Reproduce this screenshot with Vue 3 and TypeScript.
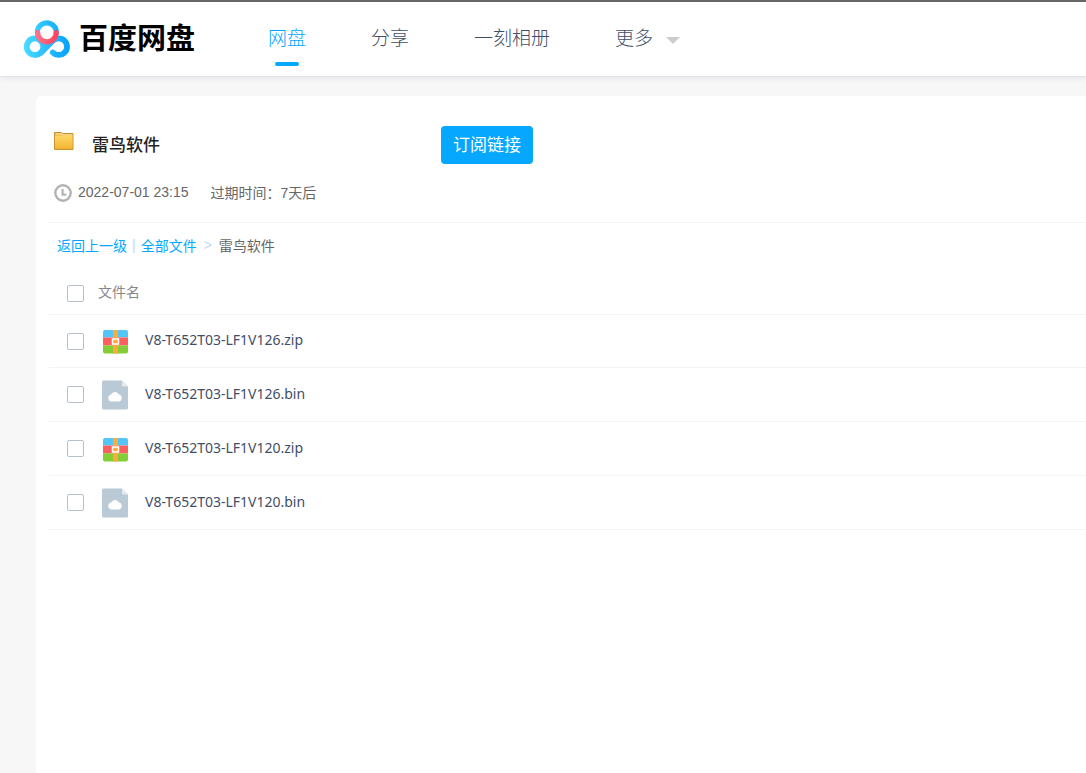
<script setup lang="ts">
import { ref, computed } from 'vue'

interface NavItem {
  label: string
  active?: boolean
  more?: boolean
}

interface FileItem {
  name: string
  kind: 'zip' | 'bin'
}

const navItems: NavItem[] = [
  { label: '网盘', active: true },
  { label: '分享' },
  { label: '一刻相册' },
  { label: '更多', more: true },
]

const files: FileItem[] = [
  { name: 'V8-T652T03-LF1V126.zip', kind: 'zip' },
  { name: 'V8-T652T03-LF1V126.bin', kind: 'bin' },
  { name: 'V8-T652T03-LF1V120.zip', kind: 'zip' },
  { name: 'V8-T652T03-LF1V120.bin', kind: 'bin' },
]

const selected = ref<string[]>([])
const allSelected = computed({
  get: () => selected.value.length === files.length,
  set: (on: boolean) => {
    selected.value = on ? files.map((f) => f.name) : []
  },
})
</script>

<template>
  <div class="page">
    <header class="topbar">
      <a class="brand" href="#">
        <svg class="brand-mark" viewBox="0 0 46 38" aria-hidden="true">
          <defs>
            <linearGradient id="ringBlue" gradientUnits="userSpaceOnUse" x1="0" y1="20" x2="46" y2="20">
              <stop offset="0" stop-color="#4bdcff" />
              <stop offset="0.45" stop-color="#2cc0ff" />
              <stop offset="1" stop-color="#06a1ff" />
            </linearGradient>
            <linearGradient id="arcRed" x1="0" y1="0" x2="1" y2="0">
              <stop offset="0" stop-color="#ff7088" />
              <stop offset="1" stop-color="#ff4560" />
            </linearGradient>
          </defs>
          <g fill="none" stroke="url(#ringBlue)" stroke-linecap="round">
            <circle cx="11" cy="26.700" r="8.300" stroke-width="5.800" />
            <path d="M17 32.700L28.800 20.800A8.300 8.300 0 1 1 28.800 32.500" stroke-width="5.800" />
            <path d="M13.300 12.400a9.500 9.500 0 1 1 19 0" stroke-width="5.200" />
          </g>
          <path d="M13.600 12.600a9.300 9.300 0 0 0 18.600 0" fill="none" stroke="url(#arcRed)" stroke-width="5.200" stroke-linecap="round" />
        </svg>
        <span class="brand-name">百度网盘</span>
      </a>
      <nav class="nav">
        <a v-for="item in navItems" :key="item.label" href="#" class="nav-link" :class="{ active: item.active }">
          {{ item.label }}<span v-if="item.more" class="caret"></span>
        </a>
      </nav>
    </header>

    <main class="panel">
      <div class="share-head">
        <svg class="folder" viewBox="0 0 20 19" aria-hidden="true">
          <defs>
            <linearGradient id="folderFill" x1="0" y1="0" x2="0" y2="1">
              <stop offset="0" stop-color="#ffd766" />
              <stop offset="1" stop-color="#f3b734" />
            </linearGradient>
          </defs>
          <path d="M.500 17.500V.500h7l1 1h10.500v16z" fill="#e5ab38" stroke="#c9912f" />
          <path d="M1.500 2h6.500l1 1h9.500" stroke="#fff0bd" fill="none" />
          <rect x="1" y="3.500" width="17.500" height="13" fill="url(#folderFill)" />
        </svg>
        <h1 class="share-title">雷鸟软件</h1>
        <button type="button" class="subscribe">订阅链接</button>
      </div>

      <div class="meta">
        <svg class="clock" viewBox="0 0 18 18" aria-hidden="true">
          <circle cx="9" cy="9" r="7.700" fill="none" stroke="#b3b3b3" stroke-width="2.400" />
          <path d="M8.600 5v5.600h3.600" fill="none" stroke="#b3b3b3" stroke-width="2.200" />
        </svg>
        <span class="date">2022-07-01 23:15</span>
        <span class="expiry">过期时间：7天后</span>
      </div>

      <nav class="crumbs">
        <a href="#">返回上一级</a><span class="bar">|</span><a href="#">全部文件</a><span class="sep">&gt;</span><span>雷鸟软件</span>
      </nav>

      <table class="files">
        <thead>
          <tr>
            <th class="pick"><input v-model="allSelected" type="checkbox" aria-label="全选" /></th>
            <th class="heading" colspan="2">文件名</th>
          </tr>
        </thead>
        <tbody>
          <tr v-for="(file, i) in files" :key="file.name">
            <td class="pick"><input :id="`file-${i}`" v-model="selected" type="checkbox" :value="file.name" /></td>
            <td class="kind">
              <svg v-if="file.kind === 'zip'" class="icon" viewBox="0 0 26 30" aria-hidden="true">
                <path d="M1 11.500V6a2 2 0 0 1 2-2h21a2 2 0 0 1 2 2v5.500z" fill="#54c5f8" />
                <path d="M1 11.500h25v8H1z" fill="#fc605c" />
                <path d="M1 19.500h25v6a2 2 0 0 1-2 2H3a2 2 0 0 1-2-2z" fill="#82ce34" />
                <path d="M11 4h5v23.500h-5z" fill="#ffab3c" />
                <path d="M10.500 13h6v5h-6z" fill="#ffab3c" stroke="#fff" stroke-width="1.500" />
              </svg>
              <svg v-else class="icon" viewBox="0 0 26 30" aria-hidden="true">
                <path d="M1.500.500H20l6 6V28a1.500 1.500 0 0 1-1.500 1.500h-23A1.500 1.500 0 0 1 0 28V2A1.500 1.500 0 0 1 1.500.500z" fill="#b9c9d6" />
                <path d="M20 .500l6 6h-4.500A1.500 1.500 0 0 1 20 5z" fill="#e3eaf0" />
                <path d="M9.500 21.500a3.500 3.500 0 0 1-.500-6.900 4.300 4.300 0 0 1 8 0 3.500 3.500 0 0 1-.500 6.900z" fill="#fff" />
              </svg>
            </td>
            <td><label class="name" :for="`file-${i}`">{{ file.name }}</label></td>
          </tr>
        </tbody>
      </table>
    </main>
  </div>
</template>

<style>
body {
  background: #f7f7f7;
}
</style>

<style scoped>
.page {
  min-height: 100vh;
  display: flex;
  flex-direction: column;
  font-family: "Liberation Sans", "Noto Sans CJK SC", sans-serif;
  font-size: 14px;
  color: #666;
}

a {
  text-decoration: none;
}

.topbar {
  display: flex;
  align-items: center;
  height: 74px;
  border-top: 2px solid #666;
  border-bottom: 1px solid #dde3e8;
  box-shadow: 0 2px 6px rgba(0, 0, 0, 0.06);
  background: #fff;
  padding-left: 24px;
  gap: 73px;
}

.brand {
  display: flex;
  align-items: center;
  gap: 9px;
  color: #000;
}

.brand-mark {
  width: 46px;
  height: 38px;
}

.brand-name {
  font-size: 29px;
  font-weight: 700;
  line-height: 38px;
}

.nav {
  display: flex;
  gap: 65px;
  align-self: stretch;
}

.nav-link {
  display: flex;
  align-items: center;
  position: relative;
  padding-bottom: 6px;
  font-size: 19px;
  font-weight: 300;
  color: #424e67;
  white-space: nowrap;
}

.nav-link.active {
  color: #06a7ff;
}

.nav-link.active::after {
  content: "";
  position: absolute;
  left: 7px;
  bottom: 10px;
  width: 24px;
  height: 4px;
  border-radius: 2px;
  background: #06a7ff;
}

.caret {
  margin: 8px 0 0 13px;
  border: 7px solid transparent;
  border-top-color: #ccc;
  border-bottom: 0;
}

.panel {
  flex: 1;
  margin: 19px 0 0 36px;
  padding: 30px 0 0 13px;
  border-top-left-radius: 6px;
  background: #fff;
}

.share-head {
  display: flex;
  align-items: center;
  height: 38px;
  padding-left: 5px;
}

.folder {
  width: 20px;
  height: 19px;
  margin-bottom: 8px;
}

.share-title {
  width: 349px;
  margin: 0 0 0 18px;
  padding-bottom: 4px;
  font-size: 17px;
  font-weight: 500;
  color: #222;
}

.subscribe {
  height: 38px;
  padding: 0 12px 4px;
  border: 0;
  border-radius: 4px;
  background: #06a7ff;
  color: #fff;
  font: 400 17px "Liberation Sans", "Noto Sans CJK SC", sans-serif;
}

.meta {
  display: flex;
  align-items: center;
  height: 58px;
  padding-left: 5px;
  border-bottom: 1px solid #f4f4f6;
}

.clock {
  width: 18px;
  height: 18px;
}

.date,
.expiry {
  padding-bottom: 3px;
}

.date {
  margin: 0 22px 0 6px;
}

.crumbs {
  display: flex;
  align-items: center;
  height: 44px;
  padding: 0 0 2px 8px;
}

.crumbs a {
  color: #06a7ff;
}

.bar {
  margin: 0 5px;
  color: #c4d8f4;
}

.sep {
  margin: 0 7px;
  color: #c4d8f4;
}

.files {
  width: 100%;
  border-collapse: collapse;
}

.files th,
.files td {
  padding: 0;
  border-bottom: 1px solid #f2f4f8;
  text-align: left;
}

.files th {
  height: 45px;
  font-weight: 400;
  color: #888;
}

.files .heading {
  height: 43px;
  padding-bottom: 2px;
}

.files th.pick {
  height: 42px;
  padding-top: 3px;
}

.files td {
  height: 53px;
  font-family: "Noto Sans", "Noto Sans CJK SC", sans-serif;
  color: #424e67;
}

.files tbody tr:first-child td {
  height: 52px;
}

.files .pick {
  width: 31px;
  padding-left: 18px;
}

.kind {
  width: 43px;
}

.files .kind {
  padding-left: 4px;
}

.kind,
.pick {
  box-sizing: content-box;
}

.icon,
.pick input {
  display: block;
}

.icon {
  width: 26px;
  height: 30px;
}

.name {
  display: block;
  padding-bottom: 3px;
}

.pick input {
  appearance: none;
  width: 17px;
  height: 17px;
  margin: 0;
  border: 1px solid #b4c0d0;
  border-radius: 2px;
  background: #fff;
}

.pick input:checked {
  background: #06a7ff;
  border-color: #06a7ff;
}
</style>
